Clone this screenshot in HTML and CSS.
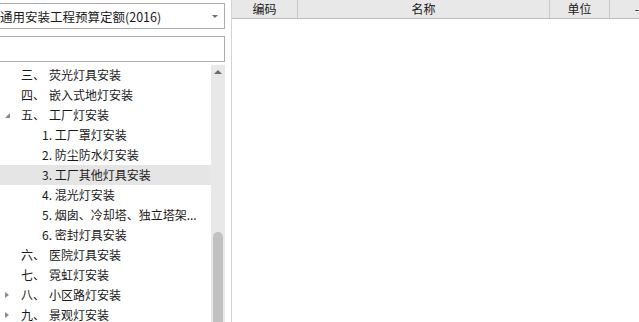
FILE: index.html
```html
<!DOCTYPE html>
<html lang="zh-CN">
<head>
  <meta charset="UTF-8">
  <title>定额库</title>
  <link rel="stylesheet" href="styles.css">
</head>
<body>
  <div class="layout">
    <div class="side">
      <div class="combo">
        <span class="combo-text">通用安装工程预算定额(2016)</span>
        <span class="combo-arrow"></span>
      </div>
      <div class="search"></div>
      <div class="tree-wrap">
        <ul class="tree">
          <li class="node"><span class="exp"></span><span class="num">三、</span>荧光灯具安装</li>
          <li class="node"><span class="exp"></span><span class="num">四、</span>嵌入式地灯安装</li>
          <li class="node"><span class="exp open"></span><span class="num">五、</span>工厂灯安装</li>
          <li class="node child">1. 工厂罩灯安装</li>
          <li class="node child">2. 防尘防水灯安装</li>
          <li class="node child selected">3. 工厂其他灯具安装</li>
          <li class="node child">4. 混光灯安装</li>
          <li class="node child">5. 烟囱、冷却塔、独立塔架...</li>
          <li class="node child">6. 密封灯具安装</li>
          <li class="node"><span class="exp"></span><span class="num">六、</span>医院灯具安装</li>
          <li class="node"><span class="exp"></span><span class="num">七、</span>霓虹灯安装</li>
          <li class="node"><span class="exp closed"></span><span class="num">八、</span>小区路灯安装</li>
          <li class="node"><span class="exp closed"></span><span class="num">九、</span>景观灯安装</li>
        </ul>
        <div class="scrollbar">
          <div class="scroll-up"></div>
          <div class="scroll-thumb"></div>
        </div>
      </div>
    </div>

    <div class="main">
      <div class="grid-head">
        <div class="col col-code">编码</div>
        <div class="col col-name">名称</div>
        <div class="col col-unit">单位</div>
        <div class="col col-more">-</div>
      </div>
    </div>
  </div>
</body>
</html>
```

FILE: styles.css
```css
body {
  margin: 0;
  padding: 0;
  width: 639px;
  height: 322px;
  overflow: hidden;
  background: #fff;
  font-family: "Noto Sans CJK SC", "Microsoft YaHei", sans-serif;
  color: #1a1a1a;
}

.layout {
  display: flex;
  height: 322px;
}

.side {
  width: 231px;
  border-right: 1px solid #d4d4d4;
  display: flex;
  flex-direction: column;
  overflow: hidden;
}

.combo {
  flex-shrink: 0;
  margin: 3px 6px 0 -6px;
  height: 24px;
  border: 1px solid #acacac;
  display: flex;
  align-items: center;
  justify-content: space-between;
  padding: 0 6px 0 5px;
}
.combo-text {
  font-size: 12.5px;
  white-space: nowrap;
}
.combo-arrow {
  width: 0;
  height: 0;
  border-left: 3px solid transparent;
  border-right: 3px solid transparent;
  border-top: 3px solid #707070;
}

.search {
  flex-shrink: 0;
  margin: 7px 6px 0 -6px;
  height: 24px;
  border: 1px solid #acacac;
}

.tree-wrap {
  margin-top: 3px;
  display: flex;
  flex: 1;
  overflow: hidden;
}

.tree {
  list-style: none;
  margin: 0;
  padding: 0;
  width: 211px;
}
.node {
  height: 20px;
  line-height: 20px;
  font-size: 12px;
  display: flex;
  align-items: center;
  white-space: nowrap;
}
.node.child {
  padding-left: 42px;
}
.node.selected {
  background: #e5e5e5;
}
.exp {
  width: 21px;
  height: 20px;
  position: relative;
}
.exp.closed::after {
  content: "";
  position: absolute;
  left: 5px;
  top: 7px;
  border-top: 3.5px solid transparent;
  border-bottom: 3.5px solid transparent;
  border-left: 4px solid #8a8a8a;
}
.exp.open::after {
  content: "";
  position: absolute;
  left: 5px;
  top: 8px;
  border-left: 5px solid transparent;
  border-bottom: 5px solid #8a8a8a;
}
.num {
  width: 28px;
}

.scrollbar {
  width: 14px;
  background: #e8e8e8;
  display: flex;
  flex-direction: column;
  align-items: center;
}
.scroll-up {
  margin-top: 5px;
  width: 0;
  height: 0;
  border-left: 4px solid transparent;
  border-right: 4px solid transparent;
  border-bottom: 4px solid #6a6a6a;
}
.scroll-thumb {
  margin-top: 158px;
  width: 10px;
  flex: 1;
  background: #c1c1c1;
  border-radius: 5px 5px 0 0;
}

.main {
  flex: 1;
}
.grid-head {
  display: flex;
  height: 18px;
  background: #e8e8e8;
  border-bottom: 1px solid #bdbdbd;
  font-size: 12px;
  line-height: 18px;
}
.col {
  text-align: center;
  border-right: 1px solid #c8c8c8;
}
.col-code {
  width: 65px;
}
.col-name {
  width: 251px;
}
.col-unit {
  width: 59px;
}
.col-more {
  flex: 1;
  border-right: none;
  text-align: right;
}
```
